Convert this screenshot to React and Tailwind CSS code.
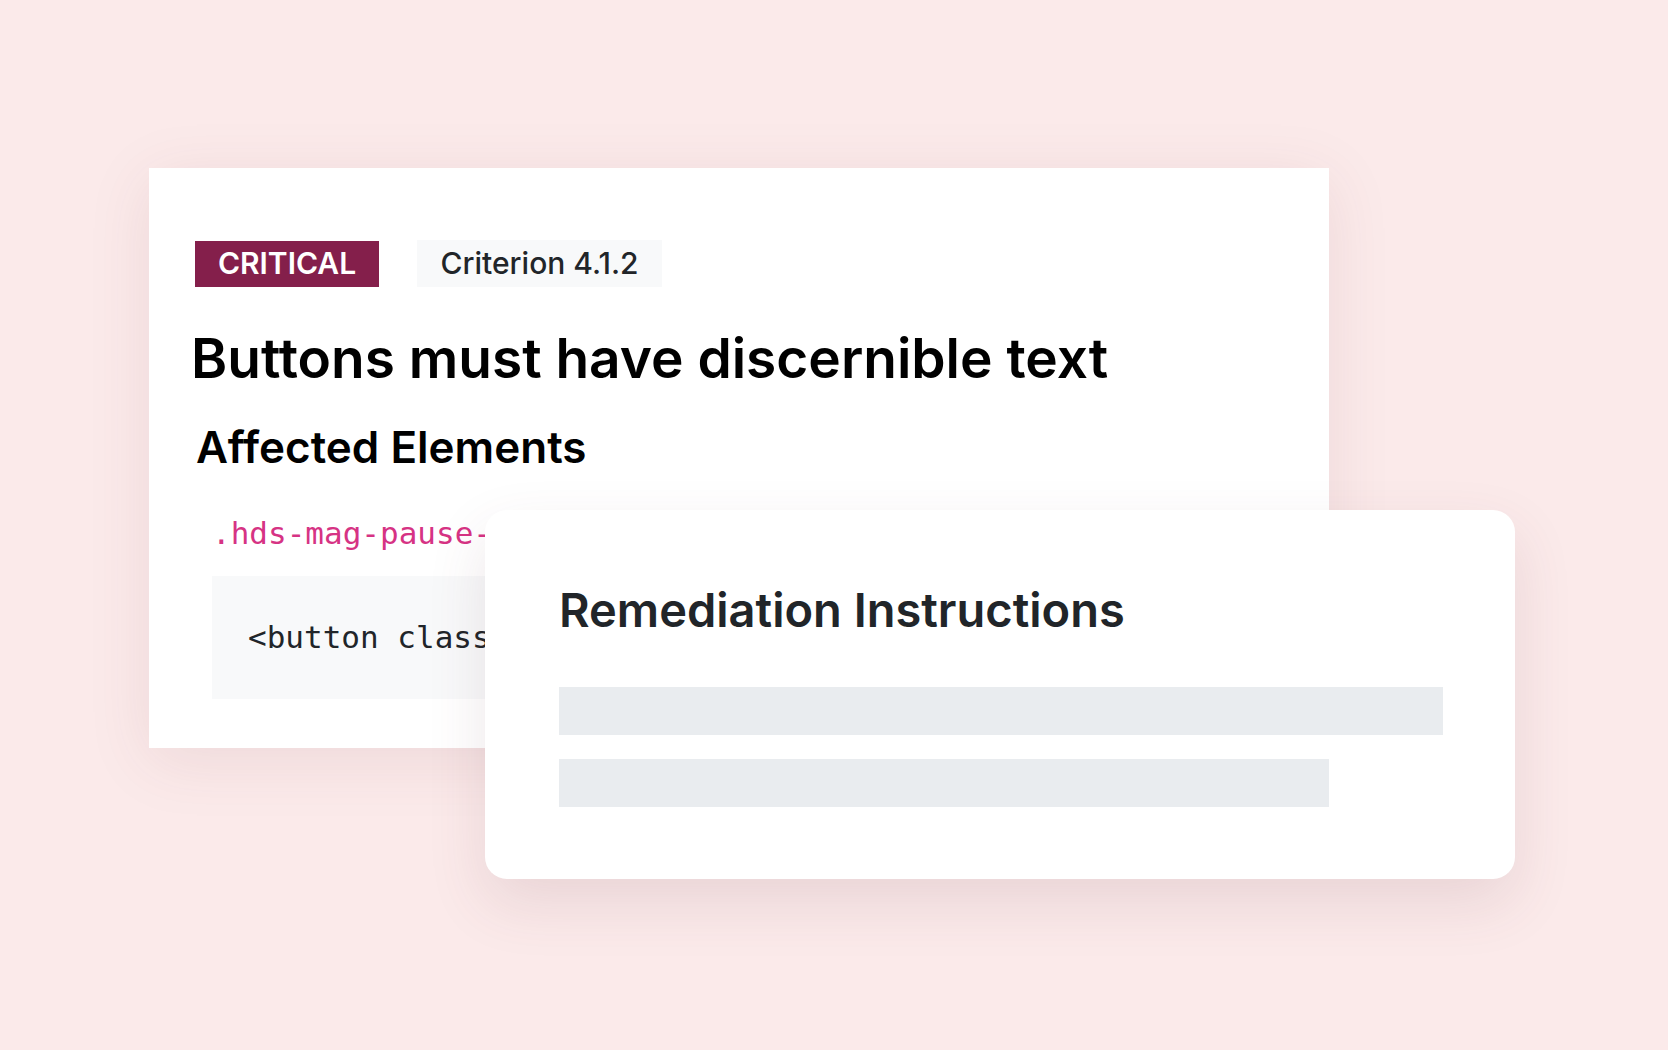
import React from 'react';

const sans = { fontFamily: 'Inter, "Noto Sans", sans-serif' };
const mono = { fontFamily: '"DejaVu Sans Mono", "Liberation Mono", monospace' };

const App = () => {
  return (
    <div className="min-h-[1050px] w-full bg-[#fbeaea] overflow-hidden" style={sans}>
      <div className="relative pl-[149px] pt-[168px]">
        {/* Issue card */}
        <div className="w-[1180px] bg-white overflow-hidden pl-[46px] pr-[44px] pt-[72px] pb-[49px] shadow-[0_12px_60px_rgba(120,60,70,0.10)]">
          <div className="flex items-center gap-[38px]">
            <span className="flex h-[46px] w-[184px] items-center justify-center bg-[#841f4b] text-[30px] font-semibold text-white">
              CRITICAL
            </span>
            <span className="flex h-[47px] w-[245px] items-center justify-center bg-[#f8f9fa] text-[30px] font-medium text-[#212529]">
              Criterion 4.1.2
            </span>
          </div>

          <h1 className="mt-[44px] -ml-[4px] text-[55px] font-semibold leading-none text-black">
            Buttons must have discernible text
          </h1>

          <h2 className="mt-[39px] ml-[1px] text-[44px] font-semibold leading-none text-black">
            Affected Elements
          </h2>

          {/* Element list */}
          <div className="ml-[17px] mt-[49px]" style={mono}>
            <div className="whitespace-nowrap text-[31px] leading-none text-[#d63384]">
              .hds-mag-pause-button
            </div>
            <div className="mt-[27px] flex h-[123px] items-center bg-[#f8f9fa] pl-[36px]">
              <code className="whitespace-nowrap text-[31px] leading-none text-[#212529]" style={mono}>
                &lt;button class="hds-mag-pause-button"&gt;&lt;/button&gt;
              </code>
            </div>
          </div>
        </div>

        {/* Remediation card, floats over the issue card */}
        <div className="absolute left-[485px] top-[510px] w-[1030px] rounded-[22px] bg-white pl-[74px] pr-[72px] pt-[76px] pb-[72px] shadow-[0_24px_60px_rgba(110,60,75,0.12)]">
          <h3 className="text-[47px] font-semibold leading-none text-[#212529]">
            Remediation Instructions
          </h3>
          <div className="mt-[54px] flex flex-col gap-[24px]">
            <div className="h-[48px] w-full bg-[#e9ecef]" />
            <div className="h-[48px] w-[770px] bg-[#e9ecef]" />
          </div>
        </div>
      </div>
    </div>
  );
};

export default App;
